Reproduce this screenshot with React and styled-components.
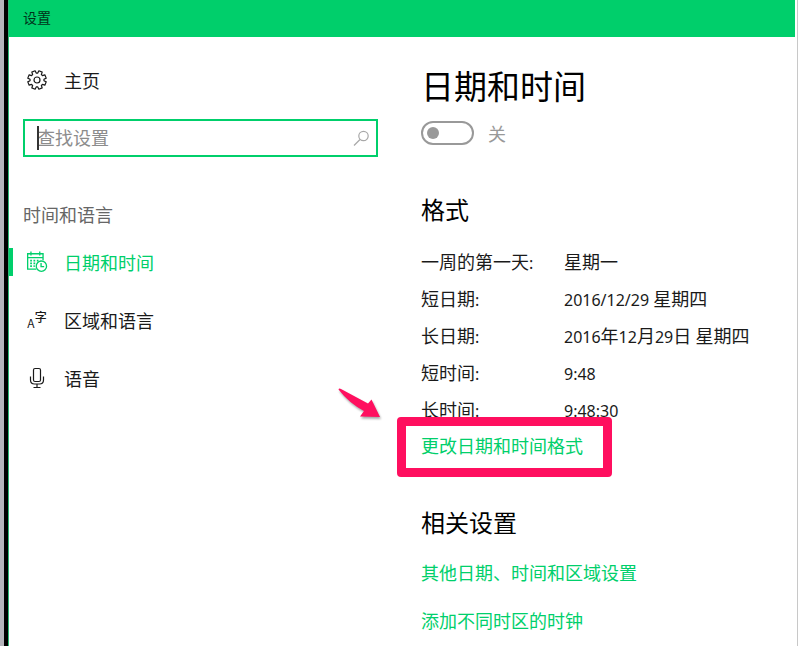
import React, { useState } from "react";
import styled, { createGlobalStyle } from "styled-components";

const green = "#00cf6b";
const pink = "#ff0f5f";

const navItems = [
	{ id: "datetime", label: "日期和时间", icon: CalendarIcon },
	{ id: "region", label: "区域和语言", icon: LanguageIcon },
	{ id: "speech", label: "语音", icon: MicIcon },
];

const formats = [
	{ label: "一周的第一天", value: "星期一" },
	{ label: "短日期", value: "2016/12/29 星期四" },
	{ label: "长日期", value: "2016年12月29日 星期四" },
	{ label: "短时间", value: "9:48" },
	{ label: "长时间", value: "9:48:30" },
];

// 8 teeth around the centre of a 22 x 22 box
const gearPoints = Array.from({ length: 8 })
	.flatMap((_, i) =>
		[
			[-16, 7],
			[-11, 9.4],
			[11, 9.4],
			[16, 7],
		].map(([deg, r]) => {
			const a = ((i * 45 + 22.5 + deg) * Math.PI) / 180;
			return `${(11 + r * Math.sin(a)).toFixed(2)},${(11 - r * Math.cos(a)).toFixed(2)}`;
		})
	)
	.join(" ");

function GearIcon() {
	return (
		<Icon viewBox="0 0 22 22">
			<polygon points={gearPoints} strokeLinejoin="round" />
			<circle cx="11" cy="11" r="3" />
		</Icon>
	);
}

function CalendarIcon() {
	return (
		<Icon viewBox="1 1 20 20">
			<path d="M10.5 17.5H2.5V3.5H16.5V9.5M2.5 7H16.5M5.5 1.5V5M13.5 1.5V5" />
			<path
				strokeWidth="1.6"
				strokeDasharray="1.6 1.4"
				d="M4.8 9.7H14M4.8 12.2H10.5M4.8 14.7H9"
			/>
			<circle cx="15" cy="14.8" r="4.7" />
			<path d="M14.7 11.8V15.2H17.5" />
		</Icon>
	);
}

function LanguageIcon() {
	return (
		<Glyphs aria-hidden="true">
			<span>A</span>
			<sup>字</sup>
		</Glyphs>
	);
}

function MicIcon() {
	return (
		<Icon viewBox="0 0 22 22">
			<rect x="7.5" y="1.5" width="7" height="13" rx="1.5" />
			<path d="M4.5 9.5V13Q4.5 17 8.5 17H13.5Q17.5 17 17.5 13V9.5M11 17V20.5M7.5 20.5H14.5" />
		</Icon>
	);
}

// Latin digits run a size smaller than the Chinese text
const Mixed = ({ text }) =>
	text
		.split(/([\d/: ]+)/)
		.filter(Boolean)
		.map((part, i) =>
			/^[\d/: ]+$/.test(part) ? <Latin key={i}>{part}</Latin> : part
		);

const App = () => {
	const [current, setCurrent] = useState("datetime");
	const [query, setQuery] = useState("");

	return (
		<Desktop>
			<GlobalStyle />
			<Backdrop />
			<Window>
				<TitleBar>设置</TitleBar>
				<Body>
					<Sidebar>
						<Home>
							<GearIcon />
							主页
						</Home>
						<Search>
							<SearchInput
								aria-label="查找设置"
								placeholder="查找设置"
								value={query}
								onChange={(e) => setQuery(e.target.value)}
							/>
							{!query && <Caret />}
							<SearchIcon viewBox="0 0 18 18">
								<circle cx="11.5" cy="7" r="4.7" />
								<path d="M8 10.5L2 16.5" />
							</SearchIcon>
						</Search>
						<Group>时间和语言</Group>
						<nav>
							{navItems.map(({ id, label, icon: ItemIcon }) => (
								<NavItem
									key={id}
									$selected={id === current}
									onClick={() => setCurrent(id)}
								>
									<ItemIcon />
									{label}
								</NavItem>
							))}
						</nav>
					</Sidebar>
					<Content>
						<Title>日期和时间</Title>
						<ToggleRow>
							<Toggle type="checkbox" role="switch" disabled />
							关
						</ToggleRow>
						<Heading>格式</Heading>
						<Formats>
							<tbody>
								{formats.map(({ label, value }) => (
									<tr key={label}>
										<th scope="row">
											<Mixed text={`${label}:`} />
										</th>
										<td>
											<Mixed text={value} />
										</td>
									</tr>
								))}
							</tbody>
						</Formats>
						<Marked>
							<FormatLink href="#format">更改日期和时间格式</FormatLink>
							<Highlight />
							<Arrow viewBox="0 0 46 36">
								<path d="M1.5 2.5Q2 1 4 2L31 16.5L34.5 12.5L43 30L23 29.5L27 24Q12 16 1.5 2.5Z" />
							</Arrow>
						</Marked>
						<Related>相关设置</Related>
						<Link href="#other">其他日期、时间和区域设置</Link>
						<Link href="#clocks">添加不同时区的时钟</Link>
					</Content>
				</Body>
			</Window>
			<Edge />
		</Desktop>
	);
};

export default App;

const GlobalStyle = createGlobalStyle`
	* {
		box-sizing: border-box;
	}

	body {
		margin: 0;
		background-color: white;
		color: #1a1a1a;
		font-family: "Noto Sans CJK SC", "Noto Sans", sans-serif;
		font-size: 18px;
		line-height: 24px;
	}

	button,
	input {
		font: inherit;
	}
`;

const Desktop = styled.div`
	display: flex;
	min-height: 100vh;
`;

const Backdrop = styled.div`
	width: 8px;
	background-color: #b5b5bb;
	border-right: solid 4px black;
`;

const Window = styled.div`
	flex: 1;
	border-left: solid 1px #2cb574;
`;

const Edge = styled.div`
	width: 12px;
	border-left: solid 2px white;
	background: linear-gradient(to right, #c8c8c8 1px, white 1px);
`;

const TitleBar = styled.header`
	height: 37px;
	padding: 5px 14px;
	background-color: ${green};
	color: #00331a;
	font-size: 14px;
`;

const Body = styled.div`
	display: grid;
	grid-template-columns: minmax(240px, 412px) 1fr;
	padding-top: 24px;
`;

const Sidebar = styled.aside`
	padding-right: 43px;
`;

const Icon = styled.svg`
	flex: none;
	width: 22px;
	height: 22px;
	fill: none;
	stroke: currentColor;
	stroke-width: 1.2;
`;

const Home = styled.button`
	display: flex;
	align-items: center;
	gap: 16px;
	width: 100%;
	height: 38px;
	padding: 0 17px;
	border: none;
	background-color: transparent;
	color: inherit;
	cursor: pointer;
`;

const Search = styled.div`
	position: relative;
	display: flex;
	align-items: center;
	height: 38px;
	margin: 20px 0 45px 14px;
	padding: 0 6px 0 12px;
	border: solid 2px ${green};
`;

const SearchInput = styled.input`
	flex: 1;
	min-width: 0;
	padding: 0 0 2px;
	border: none;
	outline: none;
	background-color: transparent;
	color: inherit;

	&::placeholder {
		color: #8c8c8c;
		opacity: 1;
	}
`;

const Caret = styled.span`
	position: absolute;
	left: 12px;
	top: 5px;
	width: 2px;
	height: 24px;
	background-color: #333;
`;

const SearchIcon = styled(Icon)`
	width: 18px;
	height: 18px;
	color: #a8a8a8;
`;

const Group = styled.h2`
	margin: 0 0 7px 14px;
	color: #666;
	font-size: 18px;
	font-weight: 400;
`;

const NavItem = styled.button`
	display: flex;
	align-items: center;
	gap: 16px;
	position: relative;
	width: 100%;
	height: 58px;
	padding: 0 17px;
	border: none;
	background-color: transparent;
	color: ${(props) => (props.$selected ? green : "inherit")};
	cursor: pointer;

	&::before {
		content: "";
		position: absolute;
		left: 0;
		width: 4px;
		height: 28px;
		background-color: ${(props) => (props.$selected ? green : "transparent")};
	}
`;

const Glyphs = styled.span`
	display: flex;
	align-items: center;
	justify-content: center;
	width: 22px;
	height: 22px;
	line-height: 12px;

	span {
		padding-top: 6px;
		font-size: 12px;
	}

	sup {
		padding-bottom: 6px;
		font-size: 12px;
		font-weight: 500;
		line-height: 12px;
	}
`;

const Content = styled.main`
	display: flex;
	flex-direction: column;
	align-items: flex-start;
`;

const Title = styled.h1`
	margin: 0 0 11px;
	font-size: 33px;
	font-weight: 400;
	line-height: 48px;
	color: black;
`;

const ToggleRow = styled.label`
	display: flex;
	align-items: center;
	gap: 14px;
	height: 26px;
	color: #999;
`;

const Toggle = styled.input`
	appearance: none;
	display: flex;
	align-items: center;
	width: 53px;
	height: 24px;
	margin: 0;
	padding: 0 4px;
	border: solid 2px #999;
	border-radius: 12px;

	&::before {
		content: "";
		width: 12px;
		height: 12px;
		border-radius: 50%;
		background-color: #999;
	}

	&:checked {
		justify-content: flex-end;
	}
`;

const Heading = styled.h2`
	margin: 47px 0 17px;
	font-size: 24px;
	font-weight: 400;
	line-height: 32px;
	color: black;
`;

const Related = styled(Heading)`
	margin: 42px 0 10px;
`;

const Formats = styled.table`
	border-collapse: collapse;

	tr {
		height: 37px;
	}

	th,
	td {
		padding: 0;
		font-weight: 400;
		text-align: left;
	}

	th {
		width: 143px;
	}
`;

const Latin = styled.span`
	font-family: "Noto Sans", sans-serif;
	font-size: 16px;
	line-height: 16px;
	white-space: pre;
`;

const Link = styled.a`
	color: ${green};
	line-height: 48px;
	text-decoration: none;

	&:hover {
		color: #888;
	}
`;

const FormatLink = styled(Link)`
	line-height: 37px;
`;

const Marked = styled.div`
	position: relative;
	height: 37px;
`;

const Highlight = styled.span`
	position: absolute;
	inset: -10px -29px -13px -24px;
	border: solid 9px ${pink};
	border-radius: 4px;
	pointer-events: none;
`;

const Arrow = styled.svg`
	position: absolute;
	left: -84px;
	top: -40px;
	width: 46px;
	height: 36px;
	fill: ${pink};
	filter: drop-shadow(1px 2px 1px rgba(0, 0, 0, 0.35));
`;
